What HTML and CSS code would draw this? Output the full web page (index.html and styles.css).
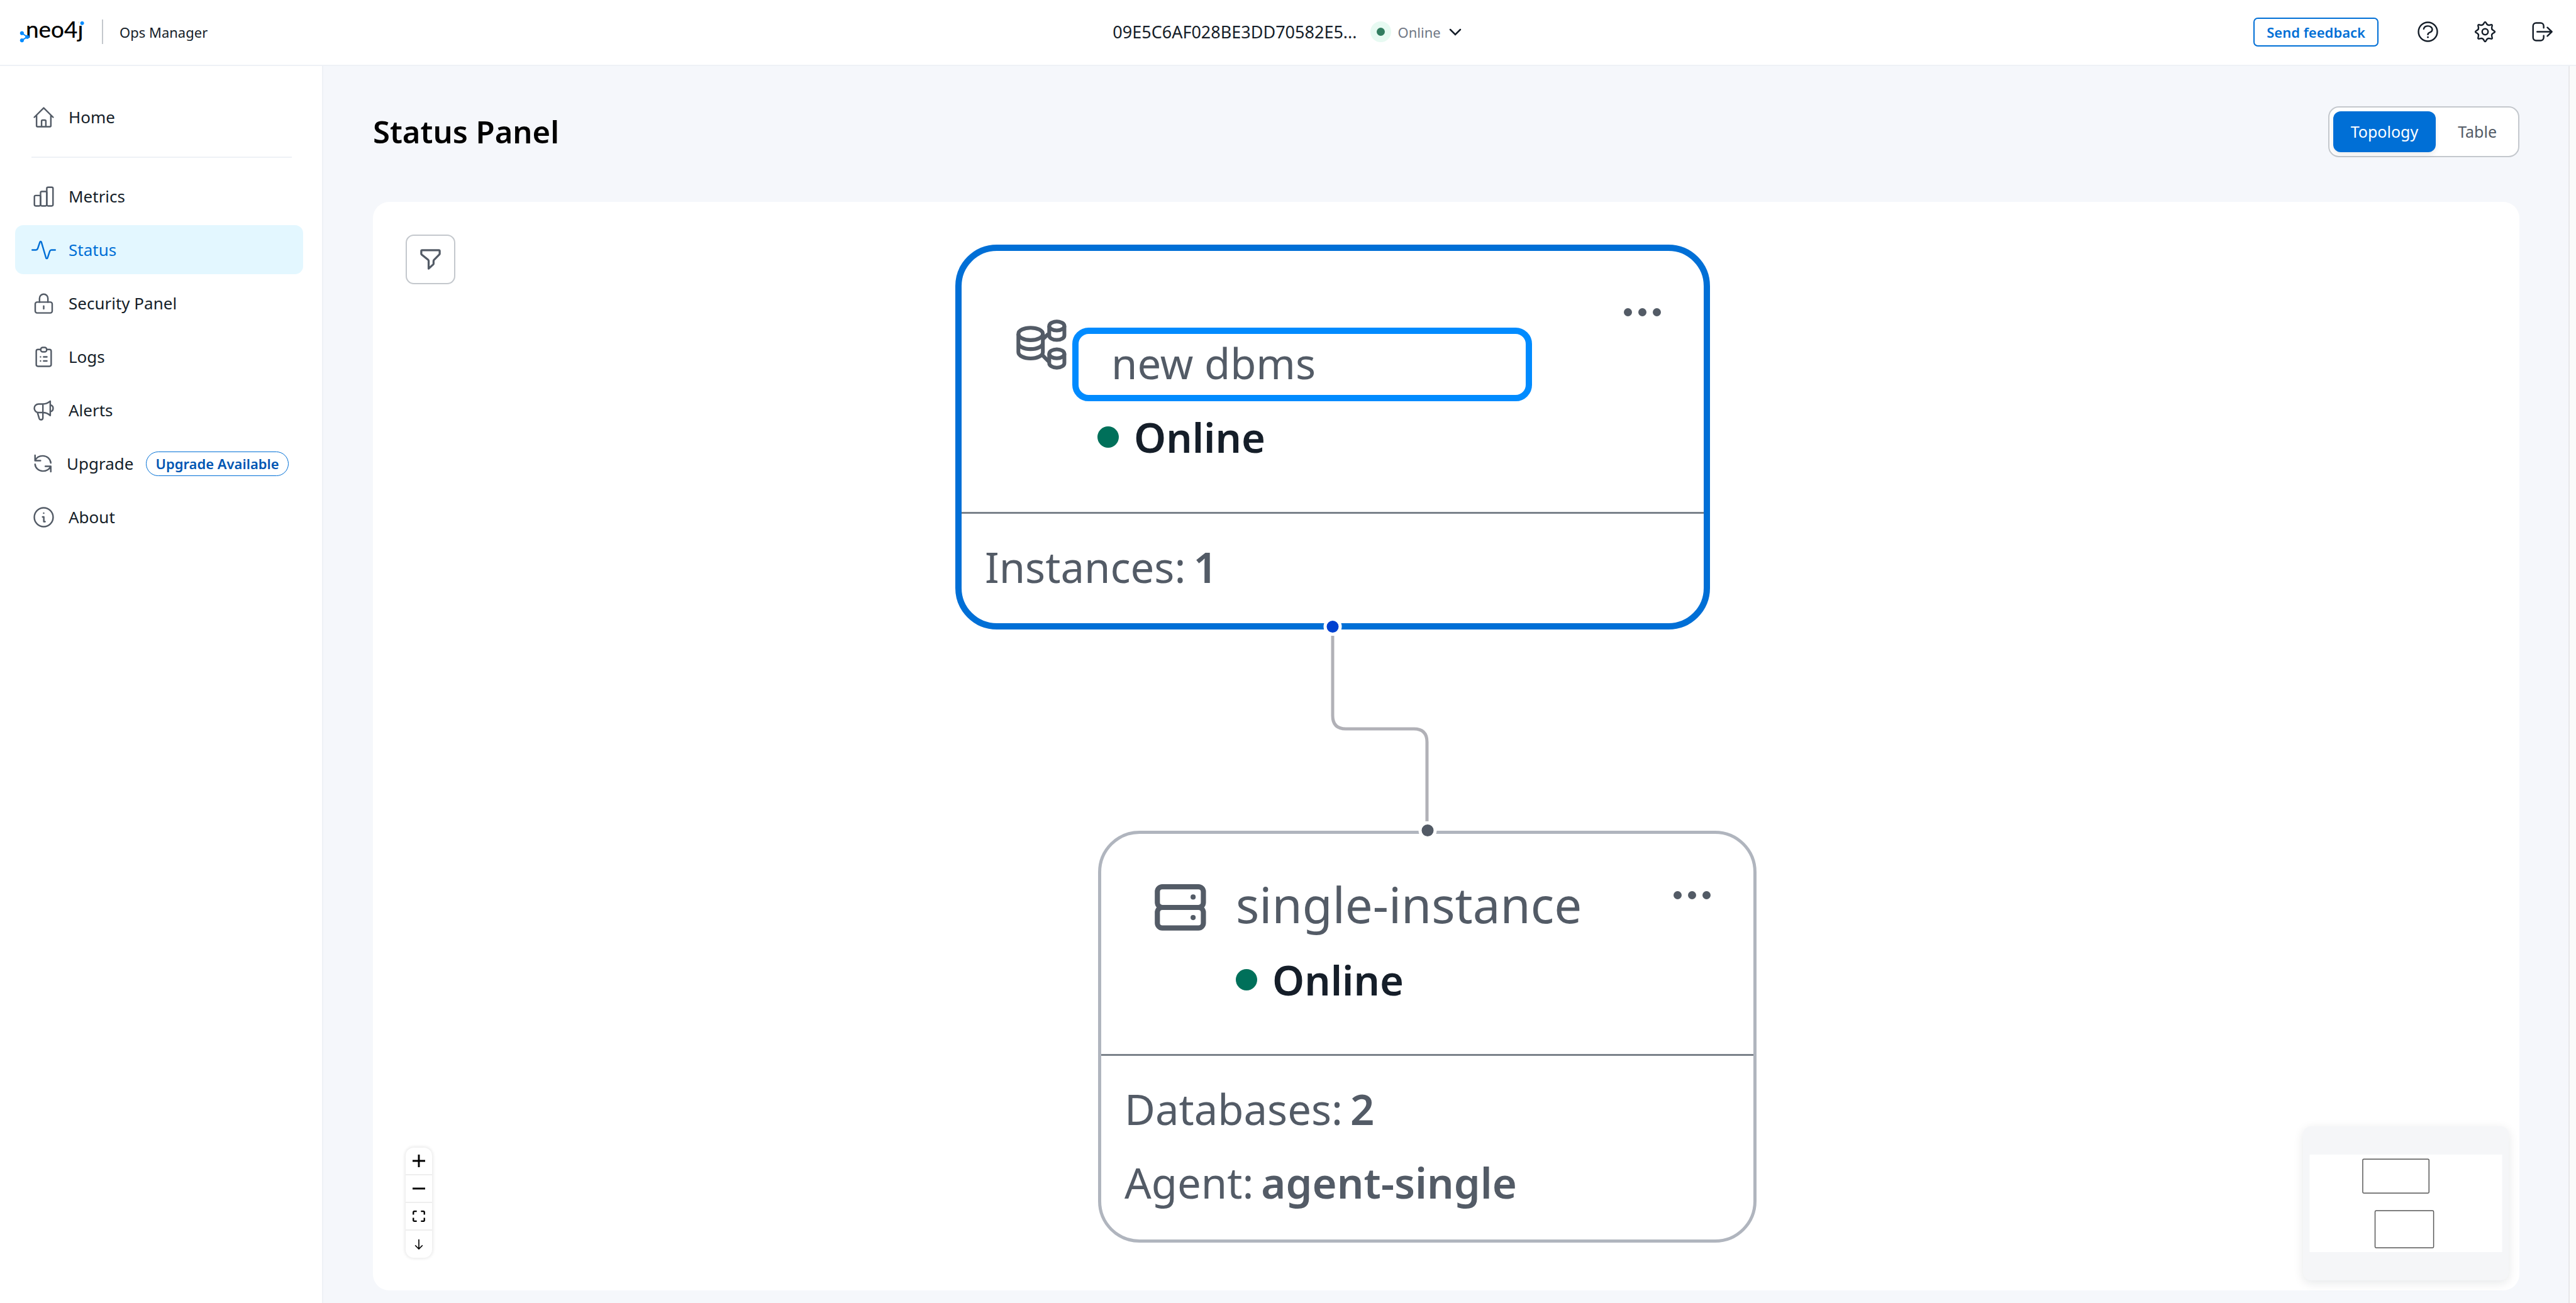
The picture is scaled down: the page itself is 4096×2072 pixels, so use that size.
FILE: index.html
```html
<!DOCTYPE html>
<html lang="en">
<head>
<meta charset="utf-8">
<meta name="viewport" content="width=device-width, initial-scale=1">
<title>Status Panel - Ops Manager</title>
<link rel="stylesheet" href="styles.css">
</head>
<body>
<header class="topbar">
  <div class="brand">
    <svg class="logo" viewBox="38 26 128 72" role="img" aria-label="neo4j">
      <text class="logo-word" x="50" y="74">neo4j</text>
      <rect x="153" y="36" width="13" height="14" fill="#fff"/>
      <g fill="#018bff" stroke="#018bff">
        <path d="M42.7 64.7 53 72 42.7 78.7" fill="none" stroke-width="2.4"/>
        <circle cx="42.7" cy="64.7" r="3.4"/><circle cx="53" cy="72" r="3.4"/><circle cx="42.7" cy="78.7" r="3.4"/><circle cx="159.500" cy="45.3" r="3.2"/>
      </g>
    </svg>
    <span class="brand-rule"></span>
    <span class="brand-name">Ops Manager</span>
  </div>
  <button class="dbms-picker" type="button">
    <span class="dbms-id">09E5C6AF028BE3DD70582E5...</span>
    <span class="halo"></span>
    <span class="dbms-state">Online</span>
    <svg class="chevron" viewBox="0 0 20 12"><path d="M2 2l8 8 8-8"/></svg>
  </button>
  <div class="actions">
    <button class="feedback" type="button">Send feedback</button>
    <button class="icon-button" type="button" aria-label="Help">
      <svg class="icon" viewBox="0 0 24 24"><circle cx="12" cy="12" r="9.2"/><path d="M7.9 9.2c.4-1.7 2.2-2.8 4.2-2.8 2.3 0 4.2 1.4 4.2 3.3 0 1.300-.8 2.300-2.200 2.900-1.300.5-2.100 1-2.100 2.100"/><path d="M12 17.300v.01" stroke-width="1.800"/></svg>
    </button>
    <button class="icon-button" type="button" aria-label="Settings">
      <svg class="icon" viewBox="-12 -12 24 24"><path d="M8.270 1.190Q5.730 2.370 6.690 5 7.640 7.640 5 6.690 2.370 5.730 1.190 8.270 0 10.800-1.190 8.270-2.370 5.730-5 6.690-7.640 7.640-6.690 5-5.730 2.370-8.270 1.190-10.800 0-8.270-1.190-5.730-2.370-6.690-5-7.640-7.640-5-6.690-2.370-5.730-1.190-8.270 0-10.800 1.190-8.270 2.370-5.730 5-6.690 7.640-7.640 6.690-5 5.730-2.370 8.270-1.190 10.800 0 8.270 1.190z"/><circle r="2.900"/></svg>
    </button>
    <button class="icon-button" type="button" aria-label="Log out">
      <svg class="icon" viewBox="0 0 24 24"><path d="M13.300 8.200V6.400a3 3 0 0 0-3-3H5.900a3 3 0 0 0-3 3v11.200a3 3 0 0 0 3 3h4.400a3 3 0 0 0 3-3v-1.800M6.900 12h14.400M16.900 7.800l4.400 4.200-4.400 4.200"/></svg>
    </button>
  </div>
</header>

<div class="shell">
  <nav class="sidebar">
    <a class="nav-item" href="#home"><svg class="icon" viewBox="0 0 24 24"><path d="M2.800 12 12 2.800 21.200 12M5 10v10.200a1 1 0 0 0 1 1h12a1 1 0 0 0 1-1V10M9.900 21v-5.200a1 1 0 0 1 1-1h2.200a1 1 0 0 1 1 1V21"/></svg>Home</a>
    <hr class="nav-rule">
    <a class="nav-item" href="#metrics"><svg class="icon" viewBox="0 0 24 24"><rect x="2.900" y="11" width="6" height="10.200" rx="1.300"/><rect x="8.900" y="7.100" width="6.100" height="14.100" rx="1.300"/><rect x="15" y="2.900" width="6.100" height="18.300" rx="1.300"/></svg>Metrics</a>
    <a class="nav-item active" href="#status" aria-current="page"><svg class="icon" viewBox="0 0 24 24"><path d="M.75 12h3.700c.9 0 1.300-.4 1.600-1.200l2.200-6.400c.3-.9 1.200-.9 1.500 0l4.500 15.300c.3.900 1.200.9 1.500 0l2.200-6.500c.3-.8.700-1.200 1.600-1.200h3.700"/></svg>Status</a>
    <a class="nav-item" href="#security"><svg class="icon" viewBox="0 0 24 24"><rect x="3.700" y="10.700" width="16.600" height="10.600" rx="1.800"/><path d="M7.900 10.700V7a4.100 4.100 0 0 1 8.200 0v3.700M12 14.600v2.700"/></svg>Security Panel</a>
    <a class="nav-item" href="#logs"><svg class="icon" viewBox="0 0 24 24"><path d="M9.100 4.800H6.300a1.600 1.600 0 0 0-1.600 1.600v13.200a1.600 1.600 0 0 0 1.600 1.600h11.400a1.600 1.600 0 0 0 1.600-1.600V6.400a1.600 1.600 0 0 0-1.600-1.600h-2.800"/><rect x="9.100" y="2.800" width="5.800" height="4.300" rx="1.900"/><path d="M8.900 12v.01M8.900 16v.01M11.900 12h3.200M11.900 16h3.200"/></svg>Logs</a>
    <a class="nav-item" href="#alerts"><svg class="icon" viewBox="0 0 24 24"><path d="M11.200 5.800H7a4.200 4.200 0 0 0 0 8.400h4.200c2.600 0 5 1 7.200 2.900V3c-2.200 1.900-4.600 2.800-7.200 2.800zM11.200 5.800v8.400M18.400 6.700c1.600.3 2.800 1.600 2.800 3.300s-1.200 3-2.800 3.300M5.900 14.200l1.700 5.700c.3.900 1 1.300 1.800 1.300 1.100 0 1.800-.7 1.800-1.800v-5.200"/></svg>Alerts</a>
    <a class="nav-item" href="#upgrade"><svg class="icon icon-small" viewBox="0 0 22 22"><path d="M3.500 3v5.300h5.300M3.700 8.100c1.100-2.700 3.900-4.500 7.300-4.500 4.200 0 7.500 2.900 7.800 6.900M18.800 19v-5.300h-5.300M18.600 13.900c-1.100 2.700-4.200 4.500-7.600 4.500-4 0-7.200-2.900-7.500-6.700"/></svg>Upgrade<span class="badge">Upgrade Available</span></a>
    <a class="nav-item" href="#about"><svg class="icon" viewBox="0 0 24 24"><circle cx="12" cy="12" r="9.200"/><path d="M10.900 11.700h1.200v4.600h1.200M12 8v.01"/></svg>About</a>
  </nav>

  <main class="main">
    <div class="page-head">
      <h1 class="title">Status Panel</h1>
      <div class="segmented" role="group" aria-label="View">
        <button class="segment selected" type="button" aria-pressed="true">Topology</button>
        <button class="segment" type="button" aria-pressed="false">Table</button>
      </div>
    </div>

    <section class="canvas" aria-label="Topology">
      <button class="filter" type="button" aria-label="Filter">
        <svg class="icon" viewBox="0 0 24 24"><path d="M3 3.800c0-.5.300-.8.800-.8h16.400c.5 0 .8.300.8.800v2.700c0 .3-.1.500-.3.700l-5.300 5.300c-.3.300-.4.600-.4 1v2.600c0 .4-.1.600-.4.900L10.200 21v-7.500c0-.4-.1-.7-.4-1L3.300 7.200C3.100 7 3 6.800 3 6.500z"/></svg>
      </button>

      <svg class="edges"><path d="M1526 690V817Q1526 838 1547 838H1655Q1676 838 1676 859V985"/></svg>

      <article class="node node-dbms">
        <div class="node-head">
          <svg class="node-icon" viewBox="80 64 292 292"><g stroke-width="22"><path d="M232 180l34-32M232 272l36 36"/><ellipse cx="163" cy="148" rx="71" ry="36"/><path d="M92 148v106c0 20 31 36 71 36s71-16 71-36V148M92 200c0 20 31 36 71 36s71-16 71-36"/><g id="small-db"><ellipse cx="315" cy="102" rx="44" ry="26"/><path d="M271 102v54c0 15 19 27 44 27s44-12 44-27v-54"/></g><use href="#small-db" y="161"/></g></svg>
          <div class="node-title">
            <input class="name-input" type="text" value="new dbms" aria-label="DBMS name">
            <p class="state"><span class="state-dot"></span>Online</p>
          </div>
          <button class="menu" type="button" aria-label="More"><i></i><i></i><i></i></button>
        </div>
        <div class="node-body">
          <p class="fact">Instances:<b>1</b></p>
        </div>
        <span class="handle handle-out"></span>
      </article>

      <article class="node node-instance">
        <div class="node-head">
          <svg class="node-icon" viewBox="79 56 300 272"><g stroke-width="30"><rect x="94" y="71" width="269" height="121" rx="29"/><rect x="94" y="192" width="269" height="120" rx="29"/></g><g fill="#535b66" stroke="none"><circle cx="303" cy="131" r="15"/><circle cx="303" cy="251" r="15"/></g></svg>
          <div class="node-title">
            <h2 class="name">single-instance</h2>
            <p class="state"><span class="state-dot"></span>Online</p>
          </div>
          <button class="menu" type="button" aria-label="More"><i></i><i></i><i></i></button>
        </div>
        <div class="node-body">
          <p class="fact">Databases:<b>2</b></p>
          <p class="fact">Agent:<b>agent-single</b></p>
        </div>
        <span class="handle handle-in"></span>
      </article>

      <div class="zoom-controls">
        <button class="zoom-button" type="button" aria-label="Zoom in"><svg viewBox="0 0 24 24"><path d="M0 12h24M12 0v24" stroke-width="3.500"/></svg></button>
        <button class="zoom-button" type="button" aria-label="Zoom out"><svg viewBox="0 0 24 24"><path d="M0 12h24" stroke-width="3.500"/></svg></button>
        <button class="zoom-button" type="button" aria-label="Fit view"><svg viewBox="0 0 24 24"><path d="M1.500 9V4.500q0-2 2-2H8M16 2.500h4.500q2 0 2 2V9M22.500 15v4.500q0 2-2 2H16M8 21.500H3.500q-2 0-2-2V15" stroke-width="2.800"/></svg></button>
        <button class="zoom-button" type="button" aria-label="Download"><svg viewBox="0 0 24 24"><path d="M12 2v18M5 13.500l7 7 7-7" stroke-width="2"/></svg></button>
      </div>

      <svg class="minimap" viewBox="0 0 400 300" role="img" aria-label="Mini map">
        <rect x="12.600" y="55" width="374.800" height="190" fill="#fff"/>
        <g fill="#fff" stroke="#555" stroke-width="1.800"><rect x="116" y="64" width="129" height="66" rx="2"/><rect x="140" y="164.500" width="114" height="72" rx="2"/></g>
      </svg>
    </section>
  </main>
  <div class="gutter"></div>
</div>
</body>
</html>
```
FILE: styles.css
```css
* { box-sizing: border-box; }

body {
  margin: 0;
  min-height: 100vh;
  display: flex;
  flex-direction: column;
  font-family: "Noto Sans", "Open Sans", sans-serif;
  font-size: 26px;
  color: #151e29;
  background: #fff;
}

button, input { font: inherit; color: inherit; }
button { margin: 0; padding: 0; border: 0; background: none; cursor: pointer; }
h1, h2, p { margin: 0; }
svg { display: block; }

.icon {
  width: 39px;
  height: 39px;
  flex: none;
  fill: none;
  stroke: currentColor;
  stroke-width: 1.5;
  stroke-linecap: round;
  stroke-linejoin: round;
}
.icon-small { width: 36px; height: 36px; }

/* Top bar */
.topbar {
  display: grid;
  grid-template-columns: 1fr auto 1fr;
  align-items: center;
  height: 105px;
  padding: 0 34px 2px 31px;
  border-bottom: 2px solid #eef1f6;
}
.brand { display: flex; align-items: center; }
.logo { width: 105px; height: 59px; }
.logo-word { font: 500 45px Lato, sans-serif; }
.brand-rule { width: 2px; height: 39px; margin: 0 26px; background: #c4c8cd; }
.brand-name { font-size: 22px; }
.dbms-picker { display: flex; align-items: center; }
.dbms-id { font-size: 27px; }
.halo {
  width: 33px;
  height: 33px;
  margin: 0 11px 0 21px;
  border: 10px solid #e7faf2;
  border-radius: 50%;
  background: #327d60;
}
.dbms-state { font-size: 22px; color: #717885; }
.chevron {
  width: 20px;
  height: 12px;
  margin-left: 13px;
  fill: none;
  stroke: #151e29;
  stroke-width: 2.5;
  stroke-linecap: round;
}
.actions { display: flex; align-items: center; justify-content: flex-end; }
.feedback {
  height: 46px;
  margin-right: 59px;
  padding: 0 19px;
  border: 2px solid #006fd6;
  border-radius: 7px;
  color: #006fd6;
  font-size: 22px;
  font-weight: 600;
}
.icon-button + .icon-button { margin-left: 52px; }

/* Shell */
.shell { flex: 1; display: flex; }
.sidebar {
  width: 514px;
  flex: none;
  padding: 42px 30px 0 24px;
  border-right: 2px solid #eef1f6;
}
.nav-item {
  display: flex;
  align-items: center;
  gap: 20px;
  height: 78px;
  margin-bottom: 7px;
  padding: 0 24px 0 26px;
  border-radius: 13px;
  color: #151e29;
  text-decoration: none;
}
.nav-item .icon { color: #535b66; }
.nav-item.active { background: #e3f7ff; color: #006fd6; }
.nav-item.active .icon { color: #006fd6; }
.nav-rule { height: 2px; margin: 24px 18px 22px 26px; border: 0; background: #eef1f6; }
.badge {
  height: 39px;
  padding: 0 14px;
  border: 1px solid #006fd6;
  border-radius: 20px;
  color: #0056b3;
  font-size: 22px;
  font-weight: 600;
  line-height: 36px;
  white-space: nowrap;
}
.gutter { width: 12px; border-left: 2px solid #e8e8ea; background: #fafafa; }

/* Page */
.main {
  flex: 1;
  display: flex;
  flex-direction: column;
  gap: 72px;
  padding: 65px 78px 20px 79px;
  background: #f5f7fb;
}
.page-head { display: flex; align-items: center; justify-content: space-between; height: 79px; }
.title { padding-bottom: 2px; font-size: 49px; font-weight: 600; line-height: 64px; color: #000; }
.segmented {
  display: flex;
  gap: 7px;
  padding: 6px;
  border: 2px solid #c4c8cd;
  border-radius: 17px;
  background: #fff;
}
.segment {
  height: 65px;
  padding: 0 28px 2px;
  border-radius: 12px;
  color: #535b66;
  font-size: 25px;
}
.segment.selected { background: #006fd6; color: #fff; box-shadow: 0 4px 8px rgba(0, 0, 0, .08); }

/* Topology canvas */
.canvas {
  position: relative;
  flex: 1;
  border-radius: 26px;
  background: #fff;
}
.filter {
  position: absolute;
  left: 52px;
  top: 52px;
  display: grid;
  place-items: center;
  width: 79px;
  height: 79px;
  border: 2px solid #c4c8cd;
  border-radius: 13px;
  color: #535b66;
}
.filter .icon { stroke-width: 2; }
.edges {
  position: absolute;
  inset: 0;
  width: 100%;
  height: 100%;
  fill: none;
  stroke: #b1b1b7;
  stroke-width: 5;
}
.node {
  position: absolute;
  display: flex;
  flex-direction: column;
  border-radius: 66px;
  background: #fff;
  color: #535b66;
  font-size: 67px;
}
.node-dbms { left: 926px; top: 68px; width: 1200px; height: 612px; border: 10px solid #006fd6; }
.node-instance { left: 1153px; top: 1000px; width: 1047px; height: 655px; border: 5px solid #b0b5be; }
.node-head {
  display: flex;
  align-items: flex-start;
  border-bottom: 3px solid #7a818a;
  padding: 0 68px 0 87px;
}
.node-dbms .node-head { height: 418px; }
.node-instance .node-head { height: 353px; padding-left: 85px; }
.node-icon { width: 80px; height: 80px; flex: none; fill: none; stroke: #535b66; }
.node-dbms .node-icon { margin-top: 109px; }
.node-instance .node-icon { width: 82px; height: 74px; margin-top: 80px; }
.node-title { flex: 1; }
.node-dbms .node-title { padding: 122px 0 0 9px; }
.node-instance .node-title { padding: 63px 0 0 47px; }
.name-input {
  display: block;
  width: 731px;
  height: 117px;
  padding: 0 52px 6px;
  border: 10px solid #018bff;
  border-radius: 26px;
  background: #fff;
  outline: 0;
}
.name { font-size: 78px; font-weight: 400; line-height: 98px; }
.state {
  display: flex;
  align-items: center;
  gap: 24px;
  color: #151e29;
  font-size: 65px;
  font-weight: 600;
  line-height: 114px;
}
.node-dbms .state { padding-left: 40px; }
.node-instance .state { margin-top: 14px; }
.state-dot { width: 34px; height: 34px; border-radius: 50%; background: #00705a; }
.menu { display: flex; gap: 10px; padding: 10px 0; margin-top: 81px; }
.menu i { width: 13px; height: 13px; border-radius: 50%; background: #535b66; }
.node-body {
  flex: 1;
  display: flex;
  flex-direction: column;
  justify-content: center;
  padding: 0 0 6px 37px;
}
.fact { display: flex; gap: 12px; line-height: 117px; }
.fact b { font-weight: 600; }
.handle {
  position: absolute;
  left: 50%;
  width: 29px;
  height: 29px;
  border: 5px solid #fff;
  border-radius: 50%;
  transform: translateX(-50%);
}
.handle-out { bottom: -20px; background: #0041d0; }
.handle-in { top: -20px; background: #535b66; }

.zoom-controls {
  position: absolute;
  left: 52px;
  bottom: 52px;
  display: flex;
  flex-direction: column;
  border-radius: 13px;
  box-shadow: 0 0 4px 2px rgba(0, 0, 0, .08);
}
.zoom-button { display: grid; place-items: center; width: 42px; height: 44px; border-bottom: 2px solid #eee; }
.zoom-button:last-child { height: 43px; border-bottom: 0; }
.zoom-button svg { width: 20px; height: 20px; fill: none; stroke: #000; }

.minimap {
  position: absolute;
  right: 17px;
  bottom: 16px;
  width: 327px;
  height: 245px;
  border-radius: 13px;
  background: #f5f6f8;
  box-shadow: 0 4px 16px rgba(12, 26, 37, .1);
}
```
